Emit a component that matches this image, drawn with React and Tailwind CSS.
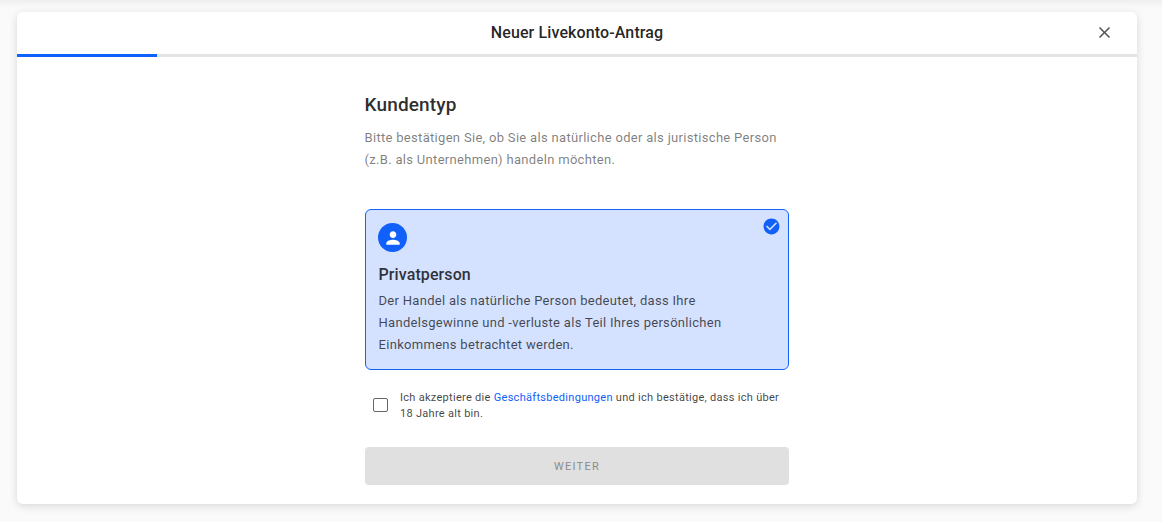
import React, { useState } from 'react';
import { MdCheckCircle, MdClose, MdPerson } from 'react-icons/md';

const STEPS_TOTAL = 8;

function ProgressBar({ step }) {
  return (
    <div className="h-[3px] w-full bg-[#e4e4e4]">
      <div className="h-full bg-[#0f62fe]" style={{ width: `${(step / STEPS_TOTAL) * 100}%` }} />
    </div>
  );
}

function ClientTypeCard({ title, children }) {
  return (
    <div className="relative mt-[38px] h-[161px] rounded-md border border-[#1163fa] bg-[#d4e1ff] px-3 pt-[13px]">
      <MdCheckCircle className="absolute top-[7px] right-[7px] size-[19px] text-[#1060f9]" />
      <div className="flex size-[29px] items-center justify-center rounded-full bg-[#1060f9]">
        <MdPerson className="size-5 text-white" />
      </div>
      <h3 className="mt-3 pl-[0.5px] text-[16px] leading-[22px] font-medium tracking-[0.1px] text-black/80">{title}</h3>
      <p className="mt-[4px] w-[370px] pl-[0.5px] text-[13px] leading-[22px] tracking-[0.3px] text-black/70">{children}</p>
    </div>
  );
}

export default function App() {
  const [accepted, setAccepted] = useState(false);

  return (
    <div className="h-[522px] w-full overflow-hidden bg-[#fafafa] pr-[25px] pl-[17px] font-['Roboto',sans-serif] shadow-[inset_0_8px_8px_-6px_rgba(0,0,0,0.07)]">
      <div className="mt-3 h-[492px] overflow-hidden rounded-md bg-white shadow-[0_2px_8px_rgba(0,0,0,0.14)]">
        <header className="grid h-[42px] grid-cols-[1fr_auto_1fr] items-center">
          <h1 className="col-start-2 text-[16px] font-medium tracking-[0.12px] text-black/87">Neuer Livekonto-Antrag</h1>
          <button type="button" aria-label="Schließen" className="mr-[23px] mb-[2px] justify-self-end">
            <MdClose className="size-[19px] text-[#555]" />
          </button>
        </header>
        <ProgressBar step={1} />

        <main className="ml-[348px] w-[424px] pt-9">
          <h2 className="-ml-[0.5px] text-[19px] leading-6 font-medium tracking-[0.15px] text-black/84">Kundentyp</h2>
          <p className="mt-[10px] -ml-[0.5px] text-[13px] leading-[22px] tracking-[0.31px] text-black/52">
            Bitte bestätigen Sie, ob Sie als natürliche oder als juristische Person
            <br />
            (z.B. als Unternehmen) handeln möchten.
          </p>

          <ClientTypeCard title="Privatperson">
            Der Handel als natürliche Person bedeutet, dass Ihre Handelsgewinne und -verluste als Teil Ihres persönlichen
            Einkommens betrachtet werden.
          </ClientTypeCard>

          <label className="mt-[19px] flex items-center pl-2">
            <input
              type="checkbox"
              checked={accepted}
              onChange={(e) => setAccepted(e.target.checked)}
              className="h-[14px] w-[15px] shrink-0 appearance-none rounded-[2px] border border-[#666] checked:border-[#0f62fe] checked:bg-[#0f62fe]"
            />
            <span className="ml-3 -mb-px pt-px text-[11px] leading-4 tracking-[0.29px] text-black/75">
              Ich akzeptiere die <a className="text-[#1060f9]">Geschäftsbedingungen</a> und ich bestätige, dass ich über
              <br />
              18 Jahre alt bin.
            </span>
          </label>

          <button
            type="button"
            disabled={!accepted}
            className="mt-[26px] h-[38px] w-full rounded-[4px] bg-[#0f62fe] pt-[2px] text-[11px] font-normal tracking-[1.3px] text-white disabled:bg-[#e0e0e0] disabled:text-[#8c8c8c]"
          >
            WEITER
          </button>
        </main>
      </div>
    </div>
  );
}
